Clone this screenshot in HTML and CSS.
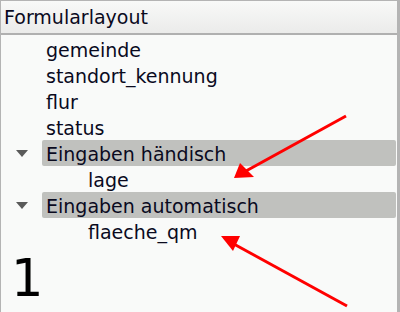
FILE: index.html
```html
<html>
    <head>
        <link rel="stylesheet" href="styles.css">
    </head>
    <body>
        <div class="panel">
            <div class="header">Formularlayout</div>
            <div class="tree">
                <div class="row"><span class="toggle"></span><span class="label">gemeinde</span></div>
                <div class="row"><span class="toggle"></span><span class="label">standort_kennung</span></div>
                <div class="row"><span class="toggle"></span><span class="label">flur</span></div>
                <div class="row"><span class="toggle"></span><span class="label">status</span></div>
                <div class="row"><span class="toggle open"></span><span class="label group">Eingaben händisch</span></div>
                <div class="row child"><span class="toggle"></span><span class="label">lage</span></div>
                <div class="row"><span class="toggle open"></span><span class="label group">Eingaben automatisch</span></div>
                <div class="row child"><span class="toggle"></span><span class="label">flaeche_qm</span></div>
            </div>
            <div class="big">1</div>

            <svg class="arrows" width="400" height="312" viewBox="0 0 400 312">
                <line x1="346" y1="116" x2="246" y2="171" stroke="#ff0000" stroke-width="3"/>
                <polygon points="234,178 240,163 254,177" fill="#ff0000"/>
                <line x1="347" y1="306" x2="232" y2="243" stroke="#ff0000" stroke-width="3"/>
                <polygon points="221,236 240,236 233,251" fill="#ff0000"/>
            </svg>
        </div>
    </body>
</html>
```

FILE: styles.css
```css
body
{
    margin: 0;
    font-family: "DejaVu Sans", Verdana, sans-serif;
    color: #0a0a1e;
    background: #f9faf9;
}

.panel
{
    position: relative;
    height: 311px;
    border-top: 1px solid #b4b4b4;
    border-left: 1px solid #b4b4b4;
    border-right: 3px solid #b4b4b4;
    background: #f9faf9;
    overflow: hidden;
}

.header
{
    height: 32px;
    line-height: 33px;
    padding-left: 3px;
    font-size: 19px;
    background: linear-gradient(#f8f9f8, #ebebea);
    border-bottom: 2px solid #b0b0b0;
}

.tree
{
    padding-top: 1px;
}

.row
{
    display: flex;
    height: 26px;
    line-height: 28px;
    font-size: 19px;
}

.toggle
{
    flex: 0 0 41px;
    display: flex;
    align-items: center;
    justify-content: center;
}

.toggle.open::before
{
    content: "";
    border-left: 6px solid transparent;
    border-right: 6px solid transparent;
    border-top: 7px solid #5a5a5a;
    margin-top: 1px;
}

.child .toggle
{
    flex-basis: 83px;
}

.label
{
    flex: 1;
    padding-left: 4px;
    margin-right: 1px;
    white-space: nowrap;
}

.group
{
    background: #c0c1be;
    border-radius: 2px;
}

.big
{
    padding-left: 10px;
    margin-top: 5px;
    font-size: 51px;
    line-height: 60px;
    color: #000;
}

.arrows
{
    position: absolute;
    left: -1px;
    top: -1px;
}
```
